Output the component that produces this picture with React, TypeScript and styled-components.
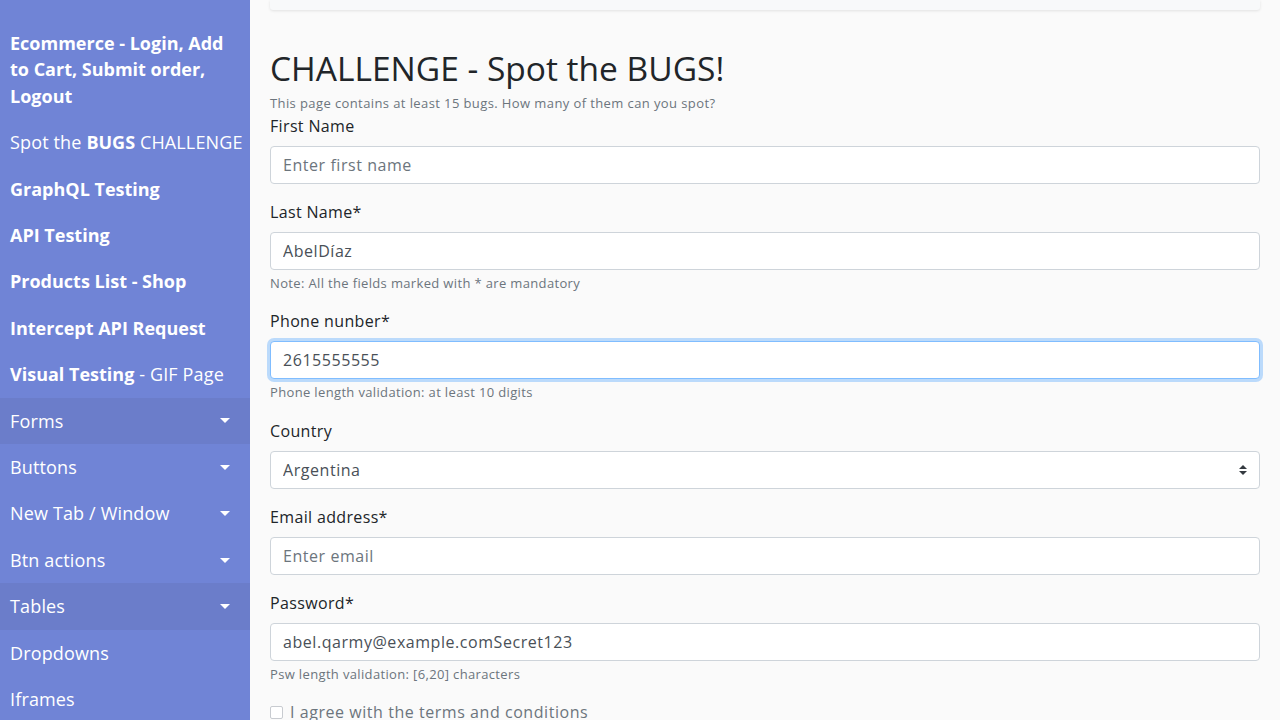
import React from "react";
import styled, { createGlobalStyle } from "styled-components";

const GlobalStyle = createGlobalStyle`
  html, body {
    margin: 0;
    padding: 0;
    height: 100%;
    overflow: hidden;
    background: #fafafa;
    font-family: "Open Sans", "Liberation Sans", sans-serif;
  }
  * {
    box-sizing: border-box;
  }
`;

const Layout = styled.div`
  display: flex;
  height: 100vh;
  overflow: hidden;
`;

const Sidebar = styled.nav`
  width: 250px;
  flex-shrink: 0;
  background: #7084d6;
  padding-top: 20px;
  display: flex;
  flex-direction: column;
`;

const NavItem = styled.div<{ $dark?: boolean; $nowrap?: boolean }>`
  display: flex;
  align-items: center;
  justify-content: space-between;
  padding: 10px 8px 10px 10px;
  font-size: 18px;
  line-height: 26.4px;
  color: #fff;
  background: ${(p) => (p.$dark ? "#6b7dca" : "transparent")};
  font-weight: 400;
  letter-spacing: 0.15px;
  white-space: ${(p) => (p.$nowrap ? "nowrap" : "normal")};

  & b {
    font-weight: 700;
    letter-spacing: 0;
  }
`;

const Caret = styled.span`
  flex-shrink: 0;
  margin-right: 12px;
  width: 0;
  height: 0;
  border-top: 5px solid #fff;
  border-left: 5px solid transparent;
  border-right: 5px solid transparent;
`;

const Main = styled.main`
  flex: 1;
  padding: 0 20px;
`;

const TopBar = styled.div`
  height: 10px;
  background: #f8f9fa;
  box-shadow: 0 1px 3px rgba(0, 0, 0, 0.1);
  border-radius: 0 0 3px 3px;
`;

const Heading = styled.h1`
  margin: 38px 0 6px;
  font-size: 33.5px;
  line-height: 1.2;
  font-weight: 500;
  color: #212529;
`;

const Subtitle = styled.p`
  margin: 0;
  font-size: 13px;
  line-height: 19.5px;
  letter-spacing: 0.4px;
  color: #6c757d;
`;

const Group = styled.div`
  margin-bottom: 16px;
`;

const Label = styled.label`
  display: block;
  margin-bottom: 8px;
  font-size: 16px;
  line-height: 24px;
  letter-spacing: 0.35px;
  color: #212529;
`;

const Input = styled.input<{ $focus?: boolean }>`
  display: block;
  width: 100%;
  height: 38px;
  padding: 6px 12px;
  font-family: inherit;
  font-size: 16px;
  line-height: 24px;
  letter-spacing: 0.55px;
  color: #495057;
  background: #fff;
  border: 1px solid ${(p) => (p.$focus ? "#80bdff" : "#ced4da")};
  border-radius: 4px;
  outline: none;
  box-shadow: ${(p) => (p.$focus ? "0 0 0 3px rgba(0, 123, 255, 0.25)" : "none")};

  &::placeholder {
    color: #6c757d;
  }
`;

const SelectWrap = styled.div`
  position: relative;
`;

const Select = styled.select`
  display: block;
  width: 100%;
  height: 38px;
  padding: 6px 28px 6px 12px;
  font-family: inherit;
  font-size: 16px;
  line-height: 24px;
  letter-spacing: 0.55px;
  color: #495057;
  background: #fff;
  border: 1px solid #ced4da;
  border-radius: 4px;
  appearance: none;
  outline: none;
`;

const SelectArrow = styled.svg`
  position: absolute;
  right: 13px;
  top: 14px;
  width: 8px;
  height: 10px;
  pointer-events: none;
`;

const Help = styled.small`
  display: block;
  margin-top: 4px;
  font-size: 13px;
  line-height: 19.5px;
  letter-spacing: 0.35px;
  color: #6c757d;
`;

const CheckRow = styled.div`
  display: flex;
  align-items: center;
  gap: 7px;
  margin-top: 3px;
`;

const Check = styled.span`
  width: 13px;
  height: 13px;
  border: 1px solid #c8cbd0;
  border-radius: 2px;
  background: #fff;
`;

const CheckLabel = styled.span`
  font-size: 16px;
  line-height: 24px;
  letter-spacing: 0.55px;
  color: #6c757d;
`;

const menu: { content: React.ReactNode; dark?: boolean; caret?: boolean; nowrap?: boolean }[] = [
  { content: <b>Ecommerce - Login, Add to Cart, Submit order, Logout</b> },
  { content: <>Spot the <b>BUGS</b> CHALLENGE</>, nowrap: true },
  { content: <b>GraphQL Testing</b> },
  { content: <b>API Testing</b> },
  { content: <b>Products List - Shop</b> },
  { content: <b>Intercept API Request</b> },
  { content: <><b>Visual Testing</b> - GIF Page</> },
  { content: "Forms", dark: true, caret: true },
  { content: "Buttons", caret: true },
  { content: "New Tab / Window", caret: true },
  { content: "Btn actions", caret: true },
  { content: "Tables", dark: true, caret: true },
  { content: "Dropdowns" },
  { content: "Iframes" },
];

const App = () => {
  return (
    <>
      <GlobalStyle />
      <Layout>
        <Sidebar>
          {menu.map((item, i) => (
            <NavItem key={i} $dark={item.dark} $nowrap={item.nowrap}>
              <span>{item.content}</span>
              {item.caret && <Caret />}
            </NavItem>
          ))}
        </Sidebar>

        <Main>
          <TopBar />
          <Heading>CHALLENGE - Spot the BUGS!</Heading>
          <Subtitle>This page contains at least 15 bugs. How many of them can you spot?</Subtitle>

          <Group>
            <Label>First Name</Label>
            <Input placeholder="Enter first name" readOnly />
          </Group>

          <Group>
            <Label>Last Name*</Label>
            <Input defaultValue="AbelDíaz" readOnly />
            <Help>Note: All the fields marked with * are mandatory</Help>
          </Group>

          <Group>
            <Label>Phone nunber*</Label>
            <Input $focus defaultValue="2615555555" readOnly />
            <Help>Phone length validation: at least 10 digits</Help>
          </Group>

          <Group>
            <Label>Country</Label>
            <SelectWrap>
              <Select defaultValue="Argentina">
                <option>Argentina</option>
              </Select>
              <SelectArrow viewBox="0 0 4 5">
                <path d="M2 0L0 2h4zm0 5L0 3h4z" fill="#343a40" />
              </SelectArrow>
            </SelectWrap>
          </Group>

          <Group>
            <Label>Email address*</Label>
            <Input placeholder="Enter email" readOnly />
          </Group>

          <Group>
            <Label>Password*</Label>
            <Input defaultValue="abel.qarmy@example.comSecret123" readOnly />
            <Help>Psw length validation: [6,20] characters</Help>
          </Group>

          <CheckRow>
            <Check />
            <CheckLabel>I agree with the terms and conditions</CheckLabel>
          </CheckRow>
        </Main>
      </Layout>
    </>
  );
};

export default App;
